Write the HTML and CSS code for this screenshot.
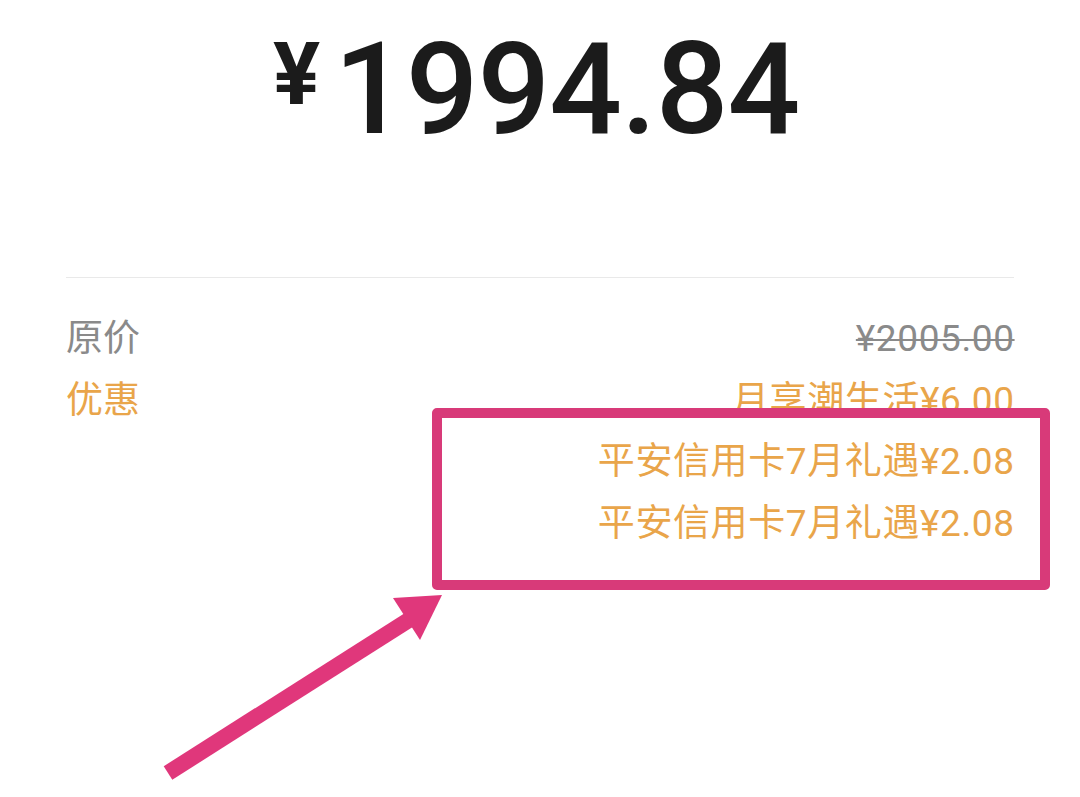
FILE: index.html
```html
<!DOCTYPE html>
<html lang="zh-CN">
<head>
<meta charset="utf-8">
<title>支付金额</title>
<link rel="stylesheet" href="styles.css">
</head>
<body>
<main class="page">
  <div class="price">
    <span class="cur">¥</span><span class="amt">1994.84</span>
  </div>
  <div class="divider"></div>
  <div class="rows">
    <div class="row">
      <span class="label gray">原价</span>
      <div class="vals">
        <div class="strike gray">¥2005.00</div>
      </div>
    </div>
    <div class="row">
      <span class="label orange">优惠</span>
      <div class="vals orange">
        <div>月享潮生活¥6.00</div>
        <div>平安信用卡7月礼遇¥2.08</div>
        <div>平安信用卡7月礼遇¥2.08</div>
      </div>
    </div>
  </div>
</main>
<div class="highlight"></div>
<svg class="arrow" width="1080" height="797" viewBox="0 0 1080 797" aria-hidden="true">
  <line x1="168" y1="773" x2="412" y2="618" stroke="#e0377b" stroke-width="16" stroke-linecap="butt"/>
  <polygon points="442,595 393,598 420,640" fill="#e0377b"/>
</svg>
</body>
</html>
```
FILE: styles.css
```css
html, body {
  margin: 0;
  padding: 0;
  background: #ffffff;
}
body {
  width: 1080px;
  height: 797px;
  overflow: hidden;
  position: relative;
  font-family: "Roboto", "Noto Sans CJK SC", sans-serif;
}
.page {
  padding: 25px 66px 0 66px;
}
.price {
  display: flex;
  justify-content: center;
  align-items: flex-start;
  color: #1b1b1b;
  height: 128px;
  padding-right: 8px;
}
.cur {
  font-size: 88px;
  line-height: 88px;
  font-weight: 700;
  margin-top: 5px;
  margin-right: 14px;
}
.amt {
  font-size: 128px;
  line-height: 128px;
  font-weight: 500;
  letter-spacing: -1px;
}
.divider {
  margin-top: 124px;
  height: 1px;
  background: #e9e9e9;
}
.rows {
  margin-top: 30px;
}
.row {
  display: flex;
  justify-content: space-between;
  align-items: flex-start;
}
.label {
  font-size: 37px;
  line-height: 61.5px;
}
.vals {
  font-size: 37px;
  line-height: 61.5px;
  letter-spacing: 0.6px;
  text-align: right;
  margin-right: -0.6px;
}
.gray {
  color: #8a8a8a;
}
.orange {
  color: #e9a54a;
}
.strike {
  text-decoration: line-through;
  text-decoration-thickness: 2px;
  text-decoration-color: #8a8a8a;
}
.highlight {
  position: absolute;
  left: 432px;
  top: 408px;
  width: 598px;
  height: 162px;
  border: 10px solid #d83a79;
  border-radius: 5px;
}
.arrow {
  position: absolute;
  left: 0;
  top: 0;
}
```
